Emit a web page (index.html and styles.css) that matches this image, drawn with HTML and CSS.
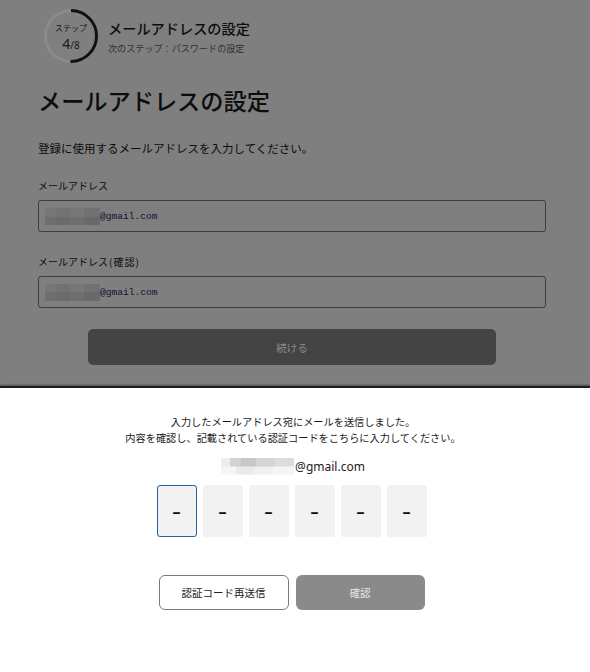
FILE: index.html
```html
<!DOCTYPE html>
<html lang="ja">
<head>
<meta charset="utf-8">
<title>メールアドレスの設定</title>
<link rel="stylesheet" href="styles.css">
</head>
<body>
<div class="page">
  <header class="step-header">
    <div class="step-ring">
      <svg class="ring-svg" width="54" height="54" viewBox="0 0 54 54">
        <circle cx="27" cy="27" r="25.5" fill="none" stroke="#8b8b8b" stroke-width="3"/>
        <circle cx="27" cy="27" r="25.5" fill="none" stroke="#111" stroke-width="3" stroke-dasharray="80.1 200" transform="rotate(-90 27 27)"/>
      </svg>
      <div class="ring-text">
        <span class="ring-label">ステップ</span>
        <span class="ring-count"><span class="ring-now">4</span>/8</span>
      </div>
    </div>
    <div class="step-titles">
      <div class="step-title">メールアドレスの設定</div>
      <div class="step-next">次のステップ：パスワードの設定</div>
    </div>
  </header>
  <main class="form">
    <h1 class="form-title">メールアドレスの設定</h1>
    <p class="form-lead">登録に使用するメールアドレスを入力してください。</p>
    <label class="field-label">メールアドレス</label>
    <div class="field"><span class="mosaic dark"></span><span class="mono">@gmail.com</span></div>
    <label class="field-label second">メールアドレス<span class="paren">(確認)</span></label>
    <div class="field"><span class="mosaic dark"></span><span class="mono">@gmail.com</span></div>
    <div class="continue">続ける</div>
  </main>
</div>
<section class="sheet">
  <p class="sheet-text">入力したメールアドレス宛にメールを送信しました。<br>内容を確認し、記載されている認証コードをこちらに入力してください。</p>
  <div class="sheet-email"><span class="mosaic light"></span><span>@gmail.com</span></div>
  <div class="code-row">
    <div class="code-box active">–</div>
    <div class="code-box">–</div>
    <div class="code-box">–</div>
    <div class="code-box">–</div>
    <div class="code-box">–</div>
    <div class="code-box">–</div>
  </div>
  <div class="actions">
    <button class="btn resend">認証コード再送信</button>
    <button class="btn confirm">確認</button>
  </div>
</section>
</body>
</html>
```
FILE: styles.css
```css
* { box-sizing: border-box; }
html, body { margin: 0; padding: 0; }
body {
  width: 590px;
  height: 672px;
  overflow: hidden;
  font-family: "Noto Sans", "Noto Sans CJK JP", sans-serif;
  color: #111;
  background: #fff;
}
.page {
  height: 386px;
  background: #7f7f7f;
  color: #0d0d0d;
}
.step-header {
  display: flex;
  align-items: center;
  gap: 10px;
  padding: 9px 0 0 44px;
}
.step-ring {
  display: grid;
  width: 54px;
  height: 54px;
}
.ring-svg, .ring-text { grid-area: 1 / 1; }
.ring-text {
  display: flex;
  flex-direction: column;
  align-items: center;
  padding-top: 13px;
}
.ring-label {
  font-family: "Noto Sans CJK JP", sans-serif;
  font-size: 8px;
  line-height: 12px;
  color: #151515;
}
.ring-count {
  font-size: 10px;
  line-height: 18px;
  color: #1a1a1a;
  margin-top: 1px;
}
.ring-now { font-size: 14px; }
.step-titles { display: flex; flex-direction: column; }
.step-title {
  font-family: "Noto Sans CJK JP", sans-serif;
  font-size: 14.2px;
  font-weight: 500;
  line-height: 20px;
}
.step-next {
  font-family: "Noto Sans CJK JP", sans-serif;
  font-size: 9.1px;
  line-height: 14px;
  margin-top: 3px;
  color: #303030;
}
.form {
  margin-left: 38px;
  width: 508px;
  display: flex;
  flex-direction: column;
}
.form-title {
  margin: 22px 0 0;
  font-family: "Noto Sans CJK JP", sans-serif;
  font-size: 23.2px;
  font-weight: 500;
  line-height: 30px;
}
.form-lead {
  margin: 24px 0 0;
  font-family: "Noto Sans CJK JP", sans-serif;
  font-size: 11.5px;
  line-height: 18px;
}
.field-label {
  margin-top: 21px;
  font-family: "Noto Sans CJK JP", sans-serif;
  font-size: 10px;
  line-height: 16px;
}
.field-label.second { margin-top: 22px; }
.paren { letter-spacing: 1px; margin-left: 1px; }
.field {
  margin-top: 6px;
  height: 32px;
  border: 1px solid #3e3e3e;
  border-radius: 3px;
  display: flex;
  align-items: center;
  padding-left: 6px;
}
.mosaic { display: inline-block; }
.mosaic.dark {
  width: 55px;
  height: 17px;
  background:
    linear-gradient(90deg, rgba(0,0,0,0) 0 20%, rgba(0,0,0,0.04) 20% 45%, rgba(0,0,0,0) 45% 70%, rgba(0,0,0,0.05) 70% 100%),
    linear-gradient(#777 0 50%, #6f6f6f 50% 100%);
}
.mono {
  font-family: "Liberation Mono", monospace;
  font-size: 9.6px;
  color: #101030;
}
.continue {
  margin: 21px auto 0;
  width: 408px;
  height: 36px;
  border-radius: 5px;
  background: #444;
  color: #8a8a8a;
  font-family: "Noto Sans CJK JP", sans-serif;
  font-size: 10.5px;
  display: flex;
  align-items: center;
  justify-content: center;
}
.sheet {
  height: 286px;
  background: #fff;
  border-top: 2px solid #1c1c1c;
  box-shadow: 0 -1px 2px rgba(0,0,0,0.4);
  padding: 26px 7px 0 0;
  display: flex;
  flex-direction: column;
  align-items: center;
}
.sheet-text {
  margin: 0 0 0 3px;
  text-align: center;
  font-family: "Noto Sans CJK JP", sans-serif;
  font-size: 10.2px;
  line-height: 16px;
  color: #1a1a1a;
}
.sheet-email {
  margin: 11px 0 0 3px;
  display: flex;
  align-items: center;
  height: 18px;
  font-size: 12px;
  color: #222;
}
.mosaic.light {
  width: 73px;
  height: 17px;
  margin-right: 1px;
  background:
    linear-gradient(90deg, #eee 0 12%, #d2d2d2 12% 28%, #c8c8c8 28% 48%, #d4d4d4 48% 72%, #dcdcdc 72% 100%) top / 100% 50% no-repeat,
    linear-gradient(90deg, #f6f6f6 0 20%, #eaeaea 20% 45%, #f0f0f0 45% 70%, #f4f4f4 70% 100%) bottom / 100% 50% no-repeat;
}
.code-row {
  margin-top: 10px;
  display: flex;
  gap: 6px;
}
.code-box {
  width: 40px;
  height: 52px;
  background: #f2f2f2;
  border-radius: 2px;
  display: flex;
  align-items: center;
  justify-content: center;
  font-size: 16px;
  font-weight: 700;
  color: #111;
}
.code-box.active {
  border: 1.5px solid #1f63a8;
  border-radius: 3px;
}
.actions {
  margin-top: 38px;
  display: flex;
  gap: 7px;
}
.btn {
  width: 130px;
  height: 35px;
  border-radius: 6px;
  font-family: "Noto Sans CJK JP", sans-serif;
  font-size: 10.5px;
  padding: 0;
}
.resend {
  background: #fff;
  border: 1px solid #7a7a7a;
  color: #222;
}
.confirm {
  width: 129px;
  background: #8a8a8a;
  border: none;
  color: #e6e6e6;
}
```
